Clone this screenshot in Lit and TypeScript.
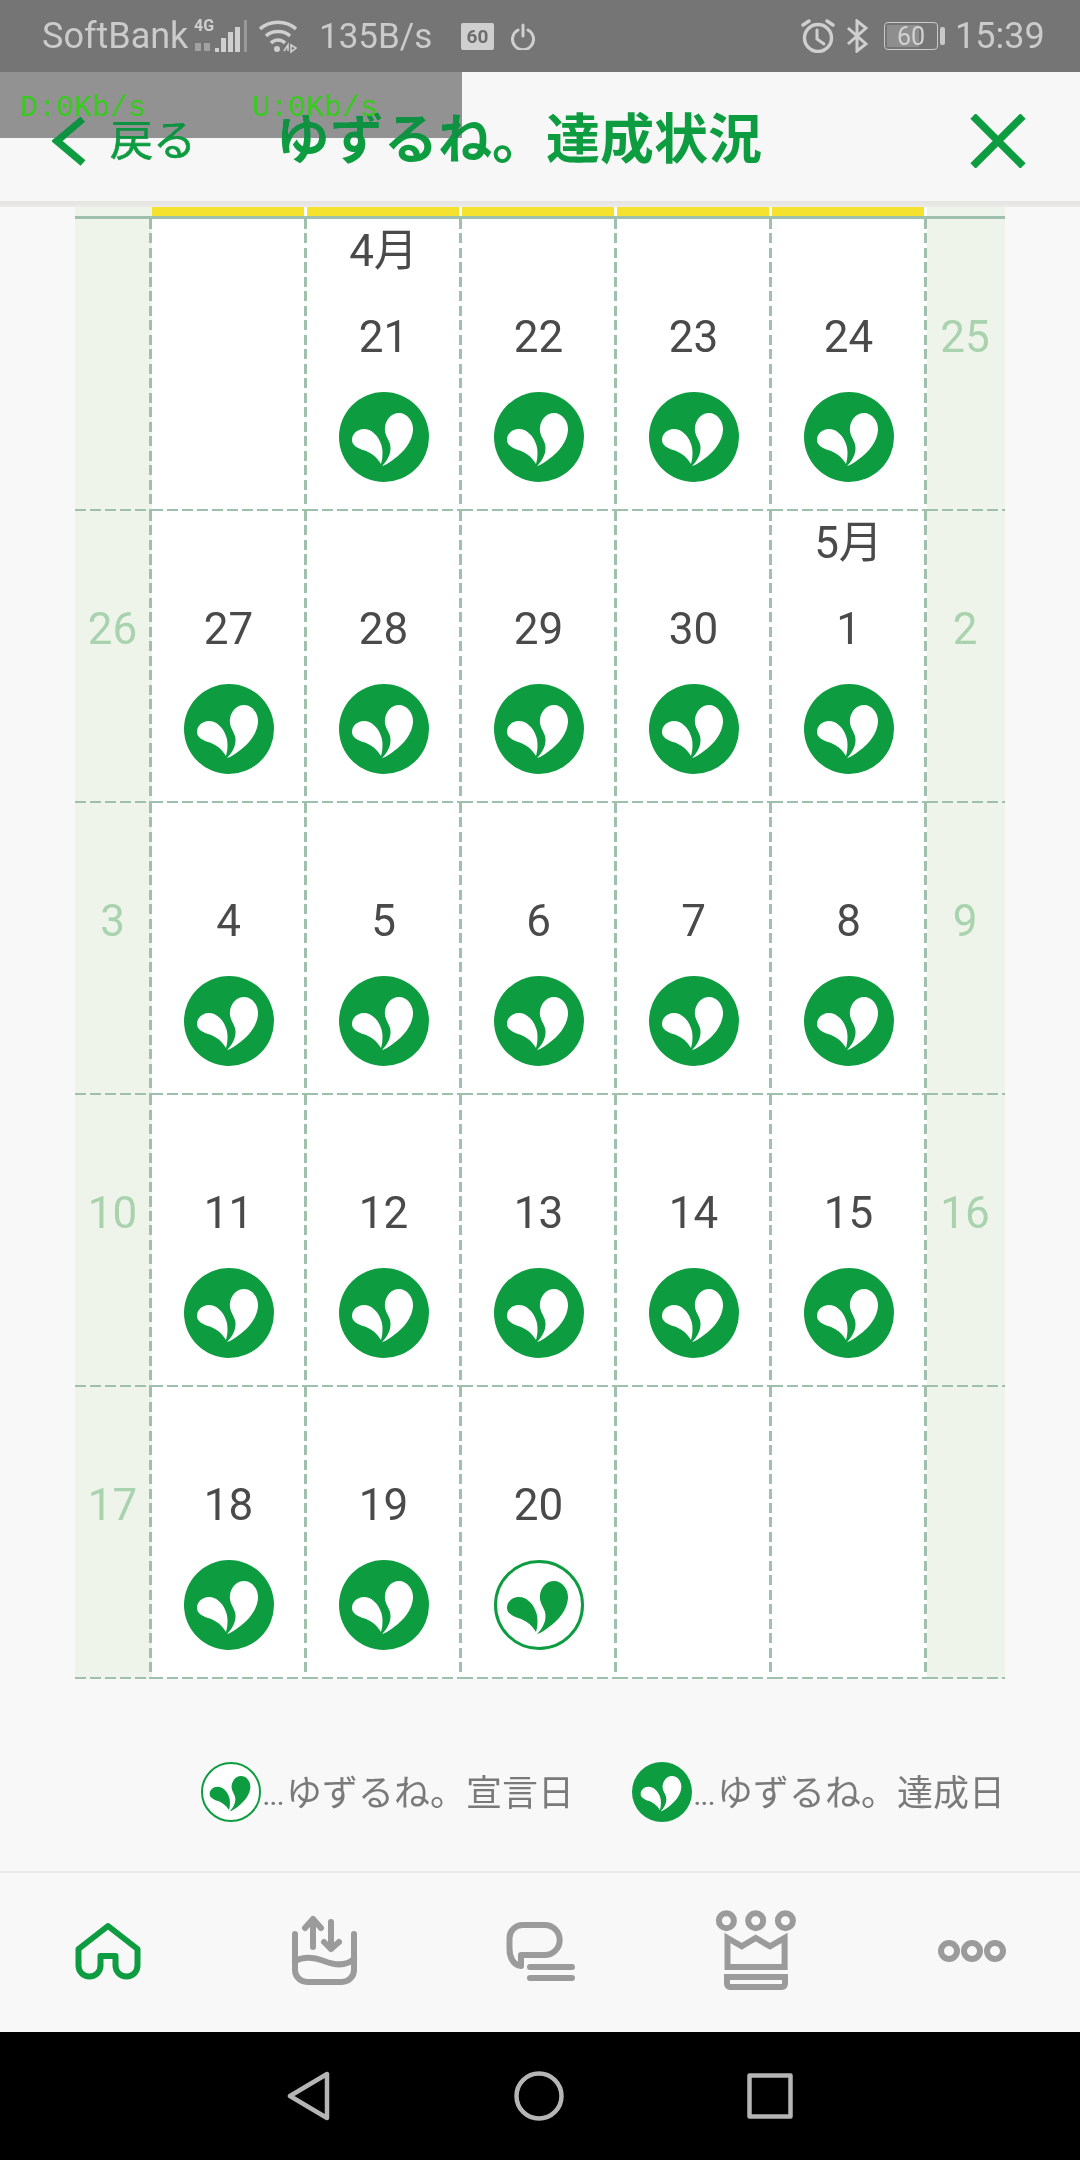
import { LitElement, css, html, svg } from "lit";
import { customElement } from "lit/decorators.js";
import { classMap } from "lit/directives/class-map.js";

type Day = { label?: string; month?: string; state?: "done" | "declared" };

const done = (label: string, month?: string): Day => ({ label, month, state: "done" });

// Each week: Sunday, five weekdays, Saturday
const WEEKS: Day[][] = [
  [{}, {}, done("21", "4月"), done("22"), done("23"), done("24"), { label: "25" }],
  [{ label: "26" }, done("27"), done("28"), done("29"), done("30"), done("1", "5月"), { label: "2" }],
  [{ label: "3" }, done("4"), done("5"), done("6"), done("7"), done("8"), { label: "9" }],
  [{ label: "10" }, done("11"), done("12"), done("13"), done("14"), done("15"), { label: "16" }],
  [{ label: "17" }, done("18"), done("19"), { label: "20", state: "declared" }, {}, {}, {}],
];

const leaves = svg`
  <path d="M-2 29C4 23 8 15 6 7C4 1 0-3 1-10C2-18 8-24 15-24C23-24 29.5-16 29-7C28.5 4 20 15 10 22C6 25 2 28-2 29Z" />
  <path d="M-3 27C-1 20-1 12-3 7C-6-2-13-8-20-8C-27-8-32-3-32 3C-32 8-27 11-21 13C-14 15-8 19-3 27Z" />
`;

function mark(state: "done" | "declared") {
  const filled = state === "done";
  return html`<svg class="mark" viewBox="-45 -45 90 90">
    <circle
      r=${filled ? 45 : 43.5}
      fill=${filled ? "#0e9c41" : "#fff"}
      stroke=${filled ? "none" : "#0e9c41"}
      stroke-width="3"
    ></circle>
    <g fill=${filled ? "#fff" : "#0e9c41"}>${leaves}</g>
  </svg>`;
}

@customElement("app-root")
export class AppRoot extends LitElement {
  // Templates ---------------------------------------------------------------

  private statusBar() {
    return html`<div class="status">
      <span class="carrier">SoftBank</span>
      <svg class="signal" width="54" height="36" viewBox="0 0 54 36">
        <text x="0" y="13" class="net">4G</text>
        <g fill="#a2a2a2"><rect x="1" y="25" width="6" height="8"></rect><rect x="10" y="25" width="6" height="8"></rect></g>
        <g fill="#cfcfcf">
          <rect x="21" y="30" width="4" height="4"></rect>
          <rect x="27" y="20" width="5" height="14"></rect>
          <rect x="34" y="14" width="5" height="20"></rect>
          <rect x="41" y="9" width="5" height="25"></rect>
        </g>
        <rect x="50" y="2" width="3" height="32" fill="#999"></rect>
      </svg>
      <svg class="wifi" width="40" height="34" viewBox="0 0 40 34" fill="none" stroke="#cfcfcf" stroke-width="3.5">
        <path d="M2 10C12 1 28 1 38 10" />
        <path d="M8 17C14 11 26 11 32 17" />
        <path d="M13 24C17 20 23 20 27 24" />
        <circle cx="19" cy="30" r="3" fill="#cfcfcf" stroke="none"></circle>
        <path d="M26 32L30 26V32M33 26V33L38 29Z" stroke-width="1.6" />
      </svg>
      <span class="speed">135B/s</span>
      <span class="saver">60</span>
      <svg class="power" width="24" height="27" viewBox="0 0 24 27" fill="none" stroke="#cfcfcf" stroke-width="3" stroke-linecap="round">
        <path d="M7 7A10.5 10.5 0 1 0 17 7" />
        <path d="M12 2V13" />
      </svg>
      <svg class="alarm" width="34" height="34" viewBox="0 0 34 34" fill="none" stroke="#cfcfcf" stroke-width="3.4" stroke-linecap="round">
        <circle cx="17" cy="19" r="13.5"></circle>
        <path d="M16 11V20L23 25" stroke-width="3" />
        <path d="M2 6L8 2M32 6L26 2" />
      </svg>
      <svg class="bluetooth" width="22" height="34" viewBox="0 0 22 34" fill="none" stroke="#cfcfcf" stroke-width="3">
        <path d="M2 9L20 25L11 32V2L20 9L2 25" />
      </svg>
      <span class="battery"><span class="level"></span><span class="percent">60</span></span>
      <span class="nub"></span>
      <span class="clock">15:39</span>
    </div>`;
  }

  private header() {
    return html`<header>
      <svg class="back-arrow" width="34" height="50" viewBox="0 0 34 50" fill="none" stroke="#0e9c41" stroke-width="7.5">
        <path d="M31 3L5 25L31 47" />
      </svg>
      <span class="back">戻る</span>
      <h1>ゆずるね。達成状況</h1>
      <svg class="close" width="56" height="54" viewBox="0 0 56 54" stroke="#0e9c41" stroke-width="7.5">
        <path d="M3 2L53 52M53 2L3 52" />
      </svg>
    </header>`;
  }

  private calendar() {
    return html`<div class="yellow-row">
        <span class="side"></span>
        ${[0, 1, 2, 3, 4].map(() => html`<span class="yellow"></span>`)}
        <span class="side"></span>
      </div>
      <div class="grid">
        ${WEEKS.map((week) =>
          week.map((day, i) => {
            const side = i === 0 || i === 6;
            return html`<div class=${classMap({ cell: true, side, last: i === 6 })}>
              <span class="month">${day.month ?? ""}</span>
              <span class="day">${day.label ?? ""}</span>
              ${day.state ? mark(day.state) : ""}
            </div>`;
          })
        )}
      </div>`;
  }

  private legend() {
    return html`<div class="legend">
      <span class="entry">${mark("declared")}<i>...</i><b>ゆずるね。宣言日</b></span>
      <span class="entry">${mark("done")}<i>...</i><b>ゆずるね。達成日</b></span>
    </div>`;
  }

  private tabBar() {
    return html`<nav>
      <svg width="66" height="58" viewBox="0 0 66 58" fill="none" stroke="#0e9c41" stroke-width="6" stroke-linejoin="round">
        <path d="M33 4L62.5 27V43.5A11 11 0 0 1 40.5 43.5V34H25.5V43.5A11 11 0 0 1 3.5 43.5V27Z" />
      </svg>
      <svg width="72" height="72" viewBox="0 0 72 72" fill="none" stroke="#9b9b9b" stroke-width="6" stroke-linecap="round" stroke-linejoin="round">
        <path d="M7 19V55A12 12 0 0 0 19 67H54A12 12 0 0 0 66 55V19" />
        <path d="M7 46C16 41 25 42 36 46C46 50 57 52 66 44" />
        <path d="M25 32V4M17 13L25 4L33 13" />
        <path d="M43 7V34M36 27L43 34L51 27" />
      </svg>
      <svg width="72" height="64" viewBox="0 0 72 64" fill="none" stroke="#9b9b9b" stroke-width="6" stroke-linecap="round" stroke-linejoin="round">
        <path d="M17 36V47C9 46 5.5 38 5.5 30V19A13 13 0 0 1 18.5 6H40.7A15 15 0 0 1 40.7 36Z" />
        <path d="M26 48H68M26 59H68" />
      </svg>
      <svg width="84" height="86" viewBox="0 0 84 86" fill="none" stroke="#9b9b9b" stroke-width="6">
        <circle cx="12.4" cy="12.7" r="7.5"></circle>
        <circle cx="41.7" cy="12.7" r="7.5"></circle>
        <circle cx="71.4" cy="12.7" r="7.5"></circle>
        <path d="M13.5 30L27.8 38.3L41.7 30L56 38.3L70.6 30V59H13.5Z" />
        <path d="M13 69H71V76A3 3 0 0 1 68 79H16A3 3 0 0 1 13 76Z" />
      </svg>
      <svg width="68" height="24" viewBox="0 0 68 24" fill="none" stroke="#9b9b9b" stroke-width="6">
        <circle cx="11" cy="12" r="8"></circle>
        <circle cx="34" cy="12" r="8"></circle>
        <circle cx="57" cy="12" r="8"></circle>
      </svg>
    </nav>`;
  }

  private systemBar() {
    return html`<div class="system">
      <svg width="44" height="50" viewBox="0 0 44 50" fill="none" stroke="#b5b5b5" stroke-width="4.5" stroke-linejoin="round">
        <path d="M40 3V47L3 25Z" />
      </svg>
      <svg width="50" height="50" viewBox="0 0 50 50" fill="none" stroke="#b5b5b5" stroke-width="4.5">
        <circle cx="25" cy="25" r="22.5"></circle>
      </svg>
      <svg width="46" height="46" viewBox="0 0 46 46" fill="none" stroke="#b5b5b5" stroke-width="4.5" stroke-linejoin="round">
        <rect x="2.5" y="2.5" width="41" height="41"></rect>
      </svg>
    </div>`;
  }

  render() {
    return html`
      ${this.statusBar()} ${this.header()}
      <div class="shade"></div>
      <main>${this.calendar()}</main>
      ${this.legend()} ${this.tabBar()} ${this.systemBar()}
      <div class="meter"><span>D:0Kb/s</span><span>U:0Kb/s</span></div>
    `;
  }

  static styles = css`
    :host {
      display: flex;
      flex-direction: column;
      position: relative;
      width: 1080px;
      height: 2160px;
      overflow: hidden;
      background: #f8f8f8;
      font-family: Roboto, "Noto Sans CJK JP", sans-serif;
      --green: #0e9c41;
      --line: #9fc0ac;
    }

    svg {
      display: block;
      flex: none;
    }

    /* Status bar */
    .status {
      display: flex;
      align-items: center;
      height: 72px;
      padding-left: 42px;
      background: #757575;
      color: #cbcbcb;
      font-size: 36px;
      white-space: nowrap;
    }
    .carrier {
      width: 152px;
    }
    .net {
      font: 700 16px Roboto, sans-serif;
      fill: #cfcfcf;
    }
    .wifi {
      margin-left: 10px;
    }
    .speed {
      width: 112px;
      margin-left: 21px;
      font-size: 35px;
    }
    .saver {
      display: flex;
      align-items: center;
      justify-content: center;
      width: 33px;
      height: 27px;
      margin-left: 30px;
      border-radius: 2px;
      background: #cfcfcf;
      color: #6d6d6d;
      font-size: 19px;
      font-weight: 700;
    }
    .power {
      margin-left: 17px;
    }
    .alarm {
      margin-left: 266px;
    }
    .bluetooth {
      margin-left: 11px;
    }
    .battery {
      position: relative;
      display: flex;
      align-items: center;
      justify-content: center;
      box-sizing: border-box;
      width: 54px;
      height: 28px;
      margin-left: 16px;
      border: 1.5px solid #c8c8c8;
      border-radius: 4px;
      overflow: hidden;
    }
    .level {
      position: absolute;
      left: 2px;
      top: 2px;
      bottom: 2px;
      width: 32px;
      background: #8e8e8e;
    }
    .percent {
      position: relative;
      color: #d2d2d2;
      font-size: 25px;
    }
    .nub {
      width: 5px;
      height: 18px;
      margin-left: 2px;
      border-radius: 2px;
      background: #c8c8c8;
    }
    .clock {
      margin-left: 10px;
    }

    /* Header */
    header {
      display: flex;
      align-items: center;
      box-sizing: border-box;
      height: 129px;
      padding: 9px 54px 0 52px;
      background: #f7f7f7;
      color: var(--green);
    }
    .back {
      margin-left: 24px;
      font-size: 43px;
      line-height: 1;
      -webkit-text-stroke: 0.7px var(--green);
    }
    h1 {
      margin: 0 0 0 80px;
      font-size: 54px;
      font-weight: 700;
      line-height: 1;
      white-space: nowrap;
    }
    .close {
      margin-left: auto;
    }
    .shade {
      height: 6px;
      background: linear-gradient(#e4e3e1, #ecebe9);
    }

    /* Calendar */
    main {
      width: 930px;
      margin-left: 75px;
    }
    .yellow-row,
    .grid {
      display: grid;
      grid-template-columns: 77px repeat(5, 155px) 78px;
    }
    .yellow-row {
      height: 9px;
    }
    .yellow {
      background: #f5e22f;
      border-right: 3px solid #fff;
    }
    .side {
      background-color: #eef4ea;
    }
    .grid {
      grid-auto-rows: 292px;
      border-top: 3px solid var(--line);
    }
    .cell {
      display: flex;
      flex-direction: column;
      align-items: center;
      padding-right: 2px;
      color: #4a4a4a;
      font-size: 44px;
      background-image: repeating-linear-gradient(to bottom, var(--line) 0 10px, transparent 10px 14.5px),
        repeating-linear-gradient(to right, var(--line) 0 11px, transparent 11px 15px);
      background-size: 3px 100%, 100% 2px;
      background-position: right top, left bottom;
      background-repeat: no-repeat;
    }
    .cell:not(.side) {
      background-color: #fff;
    }
    .cell.side {
      color: #a9d3ae;
    }
    .cell.last {
      background-image: repeating-linear-gradient(to right, var(--line) 0 11px, transparent 11px 15px);
      background-size: 100% 2px;
      background-position: left bottom;
    }
    .month {
      display: flex;
      align-items: center;
      height: 62px;
      padding-bottom: 6px;
      box-sizing: border-box;
    }
    .day {
      display: flex;
      align-items: center;
      height: 111px;
    }
    .mark {
      width: 90px;
      height: 90px;
    }

    /* Legend */
    .legend {
      display: flex;
      justify-content: flex-end;
      align-items: center;
      gap: 58px;
      box-sizing: border-box;
      height: 192px;
      padding: 34px 75px 0 0;
      color: #7a7a7a;
      font-size: 36px;
    }
    .entry {
      display: flex;
      align-items: center;
    }
    .entry .mark {
      width: 60px;
      height: 60px;
    }
    .entry i {
      width: 25px;
      padding-top: 8px;
      font-style: normal;
      font-size: 26px;
      font-weight: 500;
      text-align: center;
    }
    .entry b {
      padding-bottom: 5px;
      font-weight: inherit;
      white-space: nowrap;
    }

    /* Bottom tabs */
    nav {
      display: grid;
      grid-template-columns: repeat(5, 1fr);
      justify-items: center;
      align-items: center;
      box-sizing: border-box;
      height: 161px;
      padding-bottom: 3px;
      border-top: 2px solid #e8e8e8;
    }

    .system {
      display: flex;
      flex: 1;
      justify-content: center;
      align-items: center;
      gap: 183px;
      background: #000;
    }

    /* Traffic meter painted over the app */
    .meter {
      position: absolute;
      left: 0;
      top: 72px;
      display: flex;
      gap: 106px;
      box-sizing: border-box;
      width: 462px;
      height: 66px;
      padding: 20px 0 0 20px;
      color: #35cc1c;
      font: 30px "Liberation Mono", monospace;
      line-height: 32px;
    }
    .meter::before {
      content: "";
      position: absolute;
      inset: 0;
      background: #929292;
      mix-blend-mode: darken;
    }
    .meter span {
      position: relative;
    }
  `;
}

declare global {
  interface HTMLElementTagNameMap {
    "app-root": AppRoot;
  }
}
